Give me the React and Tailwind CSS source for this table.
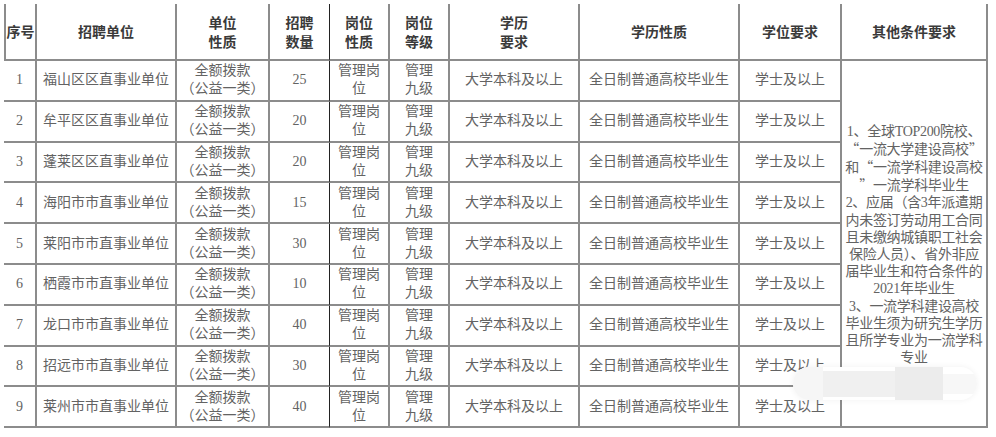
const headers = [
  ["序号"],
  ["招聘单位"],
  ["单位", "性质"],
  ["招聘", "数量"],
  ["岗位", "性质"],
  ["岗位", "等级"],
  ["学历", "要求"],
  ["学历性质"],
  ["学位要求"],
  ["其他条件要求"],
];

const rows = [
  ["1", "福山区区直事业单位", "25"],
  ["2", "牟平区区直事业单位", "20"],
  ["3", "蓬莱区区直事业单位", "20"],
  ["4", "海阳市市直事业单位", "15"],
  ["5", "莱阳市市直事业单位", "30"],
  ["6", "栖霞市市直事业单位", "10"],
  ["7", "龙口市市直事业单位", "40"],
  ["8", "招远市市直事业单位", "30"],
  ["9", "莱州市市直事业单位", "40"],
];

const notes = [
  "1、全球TOP200院校、",
  "“一流大学建设高校”",
  "和“一流学科建设高校",
  "”一流学科毕业生",
  "2、应届（含3年派遣期",
  "内未签订劳动用工合同",
  "且未缴纳城镇职工社会",
  "保险人员）、省外非应",
  "届毕业生和符合条件的",
  "2021年毕业生",
  "3、一流学科建设高校",
  "毕业生须为研究生学历",
  "且所学专业为一流学科",
  "专业",
];

const serif = "font-['Liberation_Serif','Noto_Sans_CJK_SC',serif] text-[#636363]";

// quotes drawn full width, as the CJK font sets them
function Note({ text }) {
  const parts = text.split(/([“”])/);
  return (
    <span className="whitespace-nowrap tracking-[-0.3px]">
      {parts.map((p, i) =>
        p === "“" || p === "”" ? (
          <span key={i} className="inline-block w-[14px] text-center font-['Noto_Sans_CJK_SC',sans-serif]">
            {p}
          </span>
        ) : (
          <span key={i}>{p}</span>
        )
      )}
    </span>
  );
}

function Cell({ lines, dark }) {
  return (
    <div
      className={`flex flex-col items-center justify-center text-center border-b-2 border-[#8c8c8c] text-[14px] leading-[18px] ${
        dark ? "border-r border-r-[#222]" : "border-r-2"
      }`}
    >
      {lines.map((l, i) => (
        <span key={i} className="whitespace-nowrap">
          {l}
        </span>
      ))}
    </div>
  );
}

export default function App() {
  return (
    <div className="relative w-[996px] h-[437px] bg-white pt-[4px] pl-[4px] overflow-hidden">
      <div className="grid grid-cols-[33px_140px_93px_60px_60px_60px_130px_160px_102px_146px] grid-rows-[57px_repeat(9,40.8px)] w-[984px]">
        {headers.map((h, i) => (
          <div
            key={i}
            className={`flex flex-col items-center justify-center text-center border-b-2 border-[#8c8c8c] text-[14px] leading-[19px] font-bold text-[#3a3a3a] font-['Noto_Sans_CJK_SC',sans-serif] ${
              i === 3 ? "border-r border-r-[#222]" : "border-r-2"
            } ${i === 0 ? "border-l-2" : ""}`}
          >
            {h.map((l, j) => (
              <span key={j} className="whitespace-nowrap">
                {l}
              </span>
            ))}
          </div>
        ))}

        {rows.map((r, i) => (
          <div key={r[0]} className={`contents ${serif}`}>
            <Cell lines={[r[0]]} />
            <Cell lines={[r[1]]} />
            <Cell lines={["全额拨款", "（公益一类）"]} />
            <Cell lines={[r[2]]} dark />
            <Cell lines={["管理岗", "位"]} />
            <Cell lines={["管理", "九级"]} />
            <Cell lines={["大学本科及以上"]} />
            <Cell lines={["全日制普通高校毕业生"]} />
            <Cell lines={["学士及以上"]} />
            {i === 0 && (
              <div className="row-span-9 flex flex-col items-center justify-center text-center border-b-2 border-r-2 border-[#8c8c8c] text-[14px] leading-[17.2px] pt-[2px]">
                {notes.map((n, k) => (
                  <Note key={k} text={n} />
                ))}
              </div>
            )}
          </div>
        ))}
      </div>

      {/* blurred watermark */}
      <div className="absolute left-[793px] top-[367px] w-[184px] h-[33px] rounded-full bg-white shadow-[0_0_6px_rgba(0,0,0,0.06)] flex items-center overflow-hidden">
        <div className="w-[30px] h-full bg-[#f6f6f6]" />
        <div className="w-[72px] h-[26px] bg-[#f0f0f0]" />
        <div className="w-[48px] h-full bg-[#ececec]" />
        <div className="w-[34px] h-[20px] bg-[#f7f7f7]" />
      </div>
    </div>
  );
}
